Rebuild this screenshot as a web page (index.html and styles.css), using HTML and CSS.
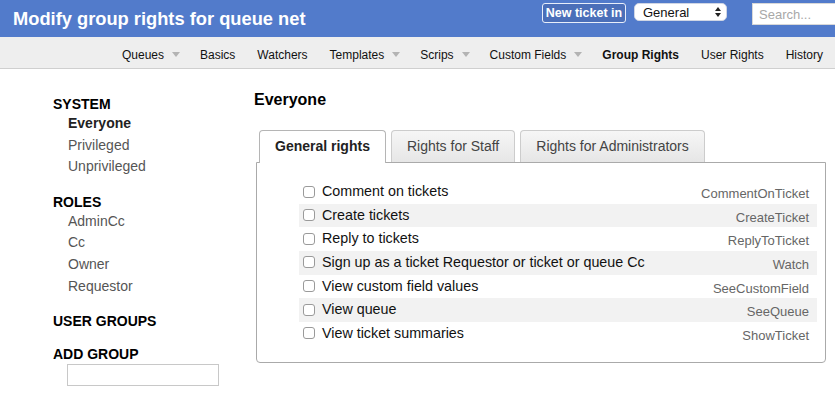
FILE: index.html
```html
<!DOCTYPE html>
<html>
<head>
<meta charset="utf-8">
<title>Modify group rights for queue net</title>
<link rel="stylesheet" href="styles.css">
</head>
<body>
<header class="topbar">
  <h1 class="title">Modify group rights for queue net</h1>
  <div class="actions">
    <button class="new-ticket">New ticket in</button>
    <div class="queue-select">
      <span>General</span>
      <svg class="updown" width="6" height="10" viewBox="0 0 6 10"><path d="M3 0 L6 4 L0 4 Z M0 6 L6 6 L3 10 Z" fill="#222"/></svg>
    </div>
    <input class="search" type="text" placeholder="Search...">
  </div>
</header>
<nav class="pagenav">
  <a class="navitem">Queues<span class="caret"></span></a>
  <a class="navitem">Basics</a>
  <a class="navitem">Watchers</a>
  <a class="navitem">Templates<span class="caret"></span></a>
  <a class="navitem">Scrips<span class="caret"></span></a>
  <a class="navitem">Custom Fields<span class="caret"></span></a>
  <a class="navitem current">Group Rights</a>
  <a class="navitem">User Rights</a>
  <a class="navitem">History</a>
</nav>
<div class="page">
  <aside class="sidebar">
    <section class="group">
      <h3 class="group-title">SYSTEM</h3>
      <ul class="group-list">
        <li class="selected">Everyone</li>
        <li>Privileged</li>
        <li>Unprivileged</li>
      </ul>
    </section>
    <section class="group">
      <h3 class="group-title">ROLES</h3>
      <ul class="group-list">
        <li>AdminCc</li>
        <li>Cc</li>
        <li>Owner</li>
        <li>Requestor</li>
      </ul>
    </section>
    <section class="group">
      <h3 class="group-title">USER GROUPS</h3>
    </section>
    <section class="group">
      <h3 class="group-title">ADD GROUP</h3>
      <input class="add-group" type="text">
    </section>
  </aside>
  <main class="content">
    <h2 class="principal">Everyone</h2>
    <ul class="tabs">
      <li class="tab active">General rights</li>
      <li class="tab">Rights for Staff</li>
      <li class="tab">Rights for Administrators</li>
    </ul>
    <div class="panel">
      <div class="right-row"><label class="right-label"><input type="checkbox" class="cb">Comment on tickets</label><span class="right-key">CommentOnTicket</span></div>
      <div class="right-row"><label class="right-label"><input type="checkbox" class="cb">Create tickets</label><span class="right-key">CreateTicket</span></div>
      <div class="right-row"><label class="right-label"><input type="checkbox" class="cb">Reply to tickets</label><span class="right-key">ReplyToTicket</span></div>
      <div class="right-row"><label class="right-label"><input type="checkbox" class="cb">Sign up as a ticket Requestor or ticket or queue Cc</label><span class="right-key">Watch</span></div>
      <div class="right-row"><label class="right-label"><input type="checkbox" class="cb">View custom field values</label><span class="right-key">SeeCustomField</span></div>
      <div class="right-row"><label class="right-label"><input type="checkbox" class="cb">View queue</label><span class="right-key">SeeQueue</span></div>
      <div class="right-row"><label class="right-label"><input type="checkbox" class="cb">View ticket summaries</label><span class="right-key">ShowTicket</span></div>
    </div>
  </main>
</div>
</body>
</html>
```
FILE: styles.css
```css
html, body {
  margin: 0;
  padding: 0;
}
body {
  font-family: "Liberation Sans", Arial, sans-serif;
  color: #111;
  background: #fff;
  overflow: hidden;
  width: 835px;
}

/* top bar */
.topbar {
  height: 37px;
  background: #527bcb;
  display: flex;
  align-items: flex-start;
  justify-content: space-between;
  overflow: hidden;
}
.title {
  margin: 0;
  padding-left: 13px;
  font-size: 18.3px;
  font-weight: bold;
  line-height: 37px;
  color: #fff;
}
.actions {
  display: flex;
  align-items: flex-start;
  padding-top: 3px;
  margin-right: -30px;
}
.new-ticket {
  box-sizing: border-box;
  height: 20px;
  width: 84px;
  padding: 0;
  border: 1px solid #e8eefa;
  border-radius: 3px;
  background: #4b6fb9;
  color: #fff;
  font-family: "Liberation Sans", Arial, sans-serif;
  font-size: 12.5px;
  font-weight: bold;
  line-height: 17px;
}
.queue-select {
  box-sizing: border-box;
  margin-left: 8px;
  width: 93px;
  height: 18px;
  background: #fff;
  border: 1px solid #d0d6e4;
  border-radius: 5px;
  display: flex;
  align-items: center;
  justify-content: space-between;
  padding: 0 5px 0 8px;
  font-size: 13px;
  color: #111;
}
.updown {
  display: block;
}
.search {
  box-sizing: border-box;
  margin-left: 25px;
  width: 113px;
  height: 22px;
  border: 1px solid #d8d8d8;
  background: #fff;
  padding: 0 6px;
  font-family: "Liberation Sans", Arial, sans-serif;
  font-size: 13px;
}
.search::placeholder {
  color: #a8a8a8;
}

/* page nav */
.pagenav {
  box-sizing: border-box;
  height: 32px;
  background: #eeeeee;
  border-bottom: 1px solid #cfcfcf;
  display: flex;
  justify-content: flex-end;
  align-items: flex-start;
  padding: 11px 12px 0 0;
  gap: 22px;
}
.navitem {
  font-size: 12px;
  line-height: 14px;
  color: #111;
  display: flex;
  align-items: center;
  white-space: nowrap;
}
.navitem.current {
  font-weight: bold;
}
.caret {
  display: inline-block;
  width: 0;
  height: 0;
  margin-left: 8px;
  margin-right: -2px;
  margin-top: -2px;
  border-left: 4.5px solid transparent;
  border-right: 4.5px solid transparent;
  border-top: 5px solid #b3b3b3;
}

/* layout */
.page {
  display: flex;
  align-items: flex-start;
}
.sidebar {
  box-sizing: border-box;
  width: 254px;
  flex: none;
  padding: 26px 0 0 53px;
}
.group {
  margin-bottom: 15px;
}
.group-title {
  margin: 0;
  font-size: 14px;
  line-height: 18px;
  font-weight: bold;
  color: #000;
}
.group-list {
  list-style: none;
  margin: 0;
  padding: 0 0 0 15px;
}
.group-list li {
  font-size: 14px;
  line-height: 21.6px;
  color: #555;
}
.group-list li.selected {
  font-weight: bold;
  color: #222;
}
.add-group {
  box-sizing: border-box;
  display: block;
  margin: 1px 0 0 14px;
  width: 152px;
  height: 22px;
  border: 1px solid #c8c8c8;
  background: #fff;
}

/* main */
.content {
  flex: 1;
  padding: 21px 9px 0 0;
}
.principal {
  margin: 0;
  font-size: 16px;
  line-height: 20px;
  font-weight: bold;
  color: #000;
}
.tabs {
  list-style: none;
  margin: 20px 0 0 0;
  padding: 0 0 0 5px;
  display: flex;
  gap: 5px;
  align-items: flex-end;
  position: relative;
  z-index: 1;
}
.tab {
  box-sizing: border-box;
  height: 32px;
  padding: 0 15px;
  border: 1px solid #cccccc;
  border-bottom: none;
  border-radius: 4px 4px 0 0;
  background: linear-gradient(#f6f6f6, #e6e6e6);
  font-size: 14px;
  line-height: 31px;
  color: #444;
  white-space: nowrap;
}
.tab.active {
  height: 33px;
  margin-bottom: -1px;
  background: #fff;
  border-color: #b5b5b5;
  font-weight: bold;
  color: #222;
}
.panel {
  border: 1px solid #aaaaaa;
  border-radius: 0 0 4px 4px;
  margin-left: 2px;
  padding: 17px 8px 17px 42px;
}
.right-row {
  display: flex;
  justify-content: space-between;
  align-items: flex-start;
  height: 23.65px;
  padding: 0 8px 0 4px;
}
.right-row:nth-child(even) {
  background: #f2f2f2;
}
.right-label {
  display: flex;
  align-items: center;
  font-size: 14.3px;
  line-height: 22px;
  color: #111;
}
.cb {
  appearance: none;
  -webkit-appearance: none;
  box-sizing: border-box;
  width: 12px;
  height: 12px;
  margin: 1px 7px 0 0;
  border: 1px solid #9a9a9a;
  border-radius: 3px;
  background: #fff;
}
.right-key {
  font-size: 13px;
  line-height: 22px;
  padding-top: 3px;
  color: #666;
}
```
